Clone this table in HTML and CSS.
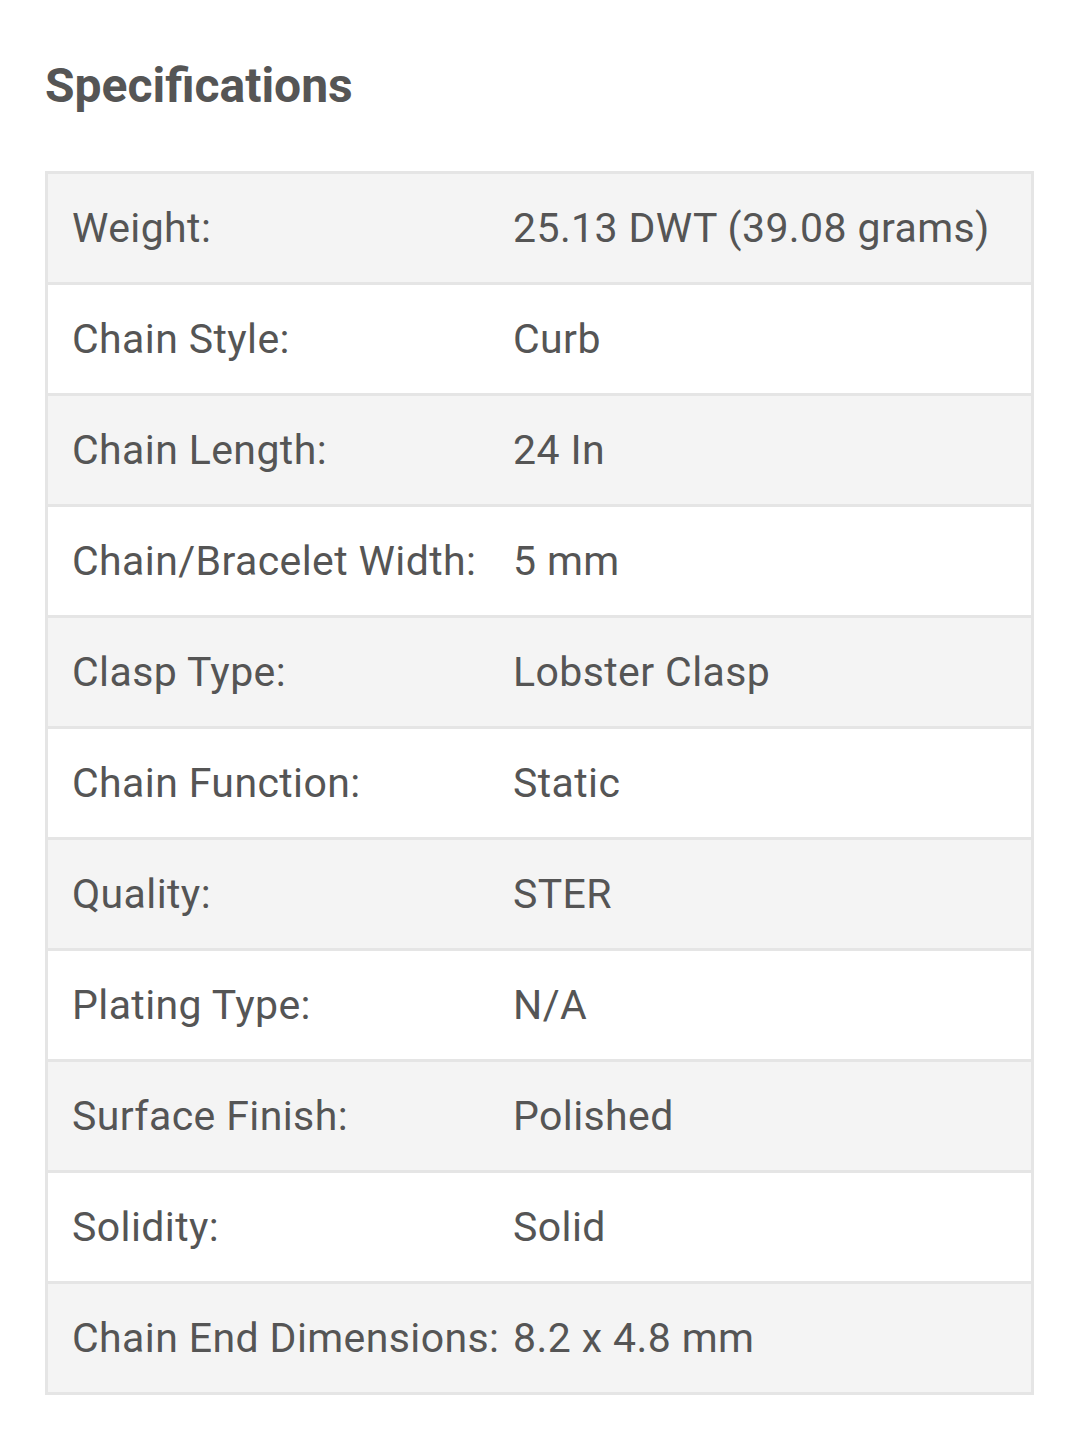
FILE: index.html
```html
<!DOCTYPE html>
<html lang="en">
<head>
<meta charset="utf-8">
<title>Specifications</title>
<link rel="stylesheet" href="styles.css">
</head>
<body>
<section class="specs">
  <h2 class="specs-title">Specifications</h2>
  <table class="spec-table">
    <tbody>
      <tr class="row-alt"><td class="label">Weight:</td><td class="value">25.13 DWT (39.08 grams)</td></tr>
      <tr><td class="label">Chain Style:</td><td class="value">Curb</td></tr>
      <tr class="row-alt"><td class="label">Chain Length:</td><td class="value">24 In</td></tr>
      <tr><td class="label">Chain/Bracelet Width:</td><td class="value">5 mm</td></tr>
      <tr class="row-alt"><td class="label">Clasp Type:</td><td class="value">Lobster Clasp</td></tr>
      <tr><td class="label">Chain Function:</td><td class="value">Static</td></tr>
      <tr class="row-alt"><td class="label">Quality:</td><td class="value">STER</td></tr>
      <tr><td class="label">Plating Type:</td><td class="value">N/A</td></tr>
      <tr class="row-alt"><td class="label">Surface Finish:</td><td class="value">Polished</td></tr>
      <tr><td class="label">Solidity:</td><td class="value">Solid</td></tr>
      <tr class="row-alt"><td class="label">Chain End Dimensions:</td><td class="value">8.2 x 4.8 mm</td></tr>
    </tbody>
  </table>
</section>
</body>
</html>
```

FILE: styles.css
```css
html, body {
  margin: 0;
  padding: 0;
  background: #ffffff;
}

body {
  font-family: Roboto, "Liberation Sans", Arial, sans-serif;
  color: #555555;
}

.specs {
  padding: 56px 0 0 45px;
  width: 989px;
}

.specs-title {
  margin: 0;
  font-size: 48px;
  font-weight: 700;
  line-height: 60px;
  color: #555555;
}

.spec-table {
  margin-top: 55px;
  width: 989px;
  border-collapse: separate;
  border-spacing: 0;
  border: 3px solid #e5e5e5;
  table-layout: fixed;
}

.spec-table td {
  height: 108px;
  padding: 0;
  font-size: 41px;
  letter-spacing: 0.4px;
  line-height: 42px;
  vertical-align: middle;
  border-top: 3px solid #e5e5e5;
  white-space: nowrap;
}

.spec-table tr:first-child td {
  border-top: none;
}

.spec-table .label {
  width: 441px;
  padding-left: 24px;
}

.row-alt td {
  background: #f4f4f4;
}
```
